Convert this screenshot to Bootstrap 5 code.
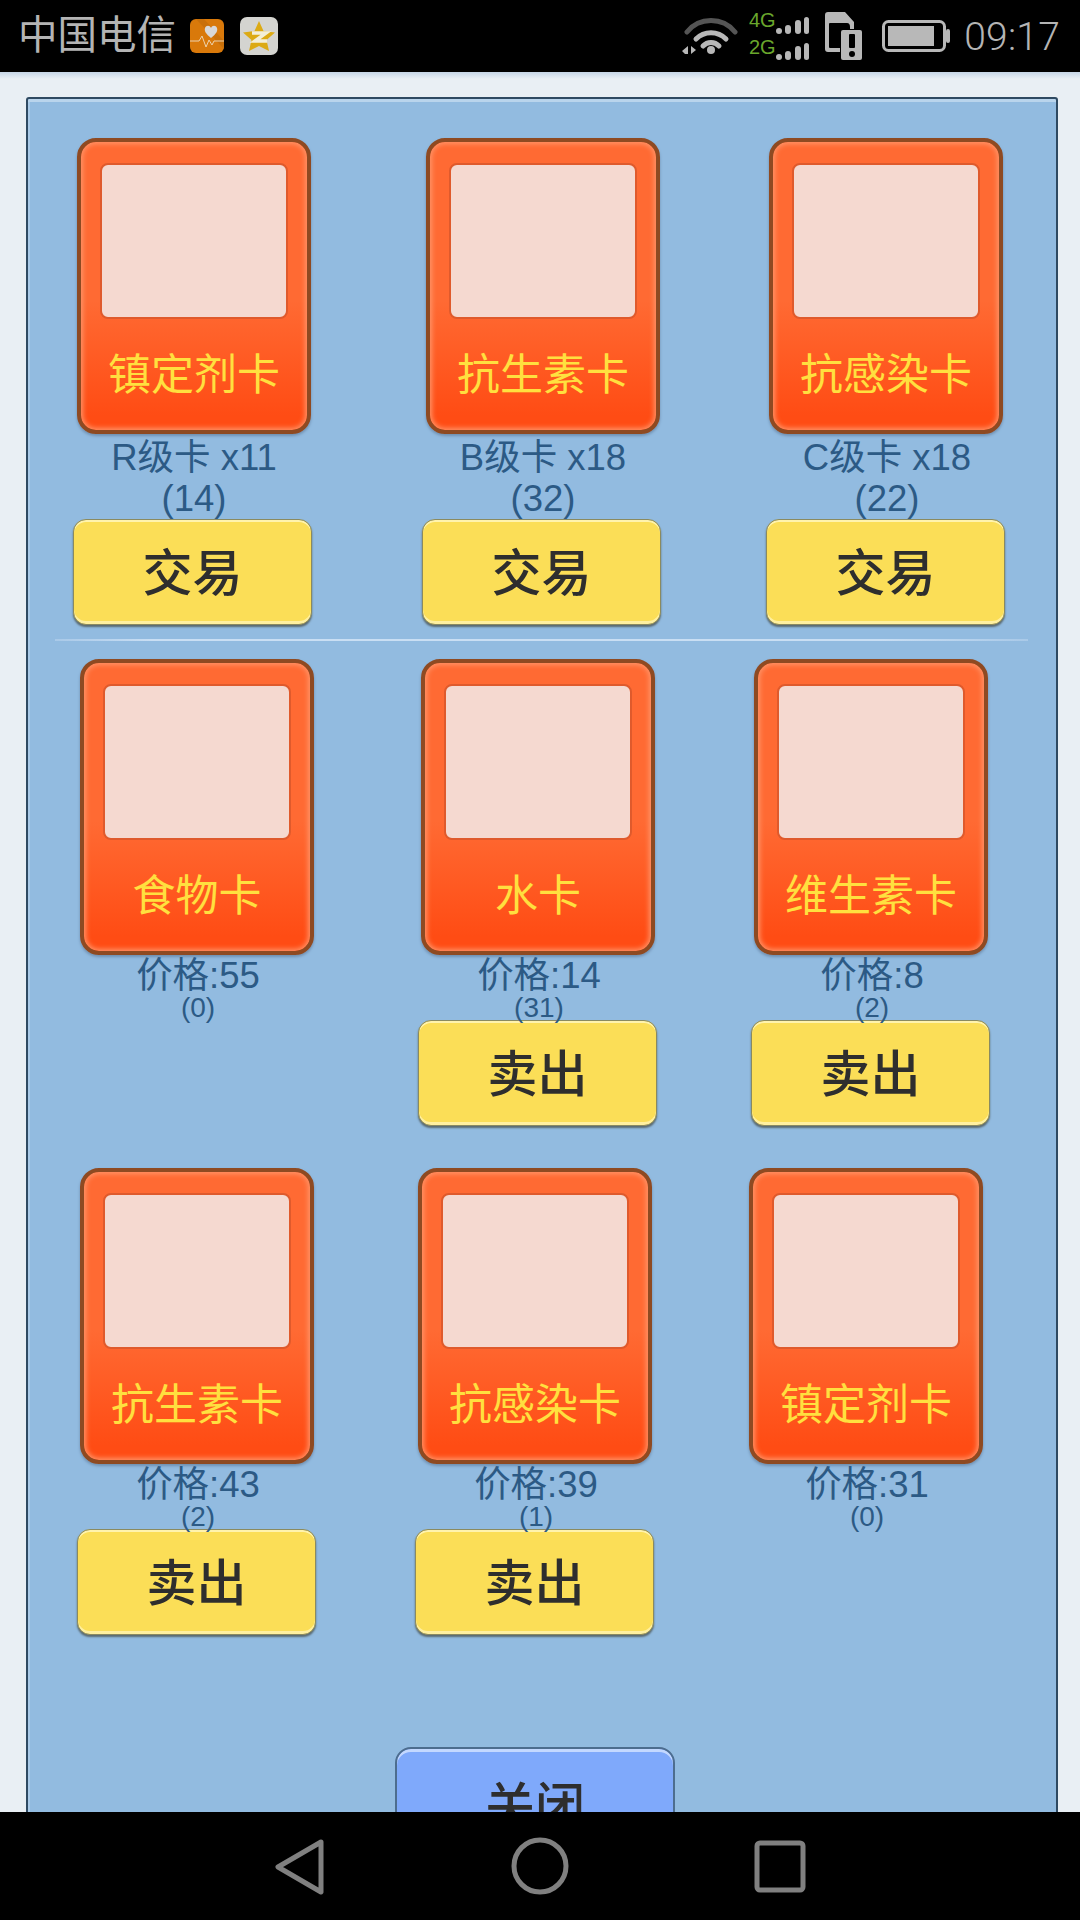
<!doctype html>
<html lang="zh-CN">
  <head>
    <meta charset="UTF-8" />
    <meta name="viewport" content="width=device-width, initial-scale=1.0" />
    <title>交易</title>
    <link
      href="https://cdn.jsdelivr.net/npm/bootstrap@5.3.0/dist/css/bootstrap.min.css"
      rel="stylesheet"
    />
    <style>
      body {
        height: 1920px;
        background: #e9eff4;
        font-family: "Liberation Sans", "Noto Sans CJK SC", sans-serif;
      }
      .status-bar {
        height: 72px;
        padding: 0 20px 0 18px;
        background: #000;
        color: #b4b4b4;
        flex: none;
      }
      .carrier { font-size: 39.5px; line-height: 1; width: 172px; margin-top: -1px; }
      .clock { font: 300 39px/1 Roboto, sans-serif; margin-left: 14px; margin-top: 2px; letter-spacing: .2px; }
      .page-area {
        min-height: 0;
        padding: 25px 22px 0 26px;
        background: linear-gradient(#c6d6e6, #e9eff4 7px);
      }
      .shop-panel {
        height: 1800px;
        border: 2px solid #2f4a62;
        border-radius: 3px 3px 0 0;
        background: #92bbe0;
        box-shadow: inset 0 3px 0 #b9d4ec, inset 2px 0 0 #a9cae8;
        padding-top: 39px;
      }
      .shop-row { display: grid; }
      .shop-row-a { grid-template-columns: 349px 344px 240px; padding-left: 45px; }
      .shop-row-b { grid-template-columns: 341px 333px 240px; padding-left: 49px; }
      .shop-row-c { grid-template-columns: 338px 331px 240px; padding-left: 49px; margin-top: 42px; }
      .goods-card {
        width: 234px;
        height: 296px;
        margin-left: 3px;
        padding: 21px 19px 0;
        border: 4px solid #8e4a22;
        border-radius: 19px;
        background: linear-gradient(#ff6a33, #ff6a33 55%, #ff4c14 95%);
        box-shadow: inset 0 0 5px 2px #ff9468, 0 2px 3px #6f8fb0;
        text-align: center;
      }
      .shop-row-a .goods-card, .shop-row-a .card-caption { margin-left: 4px; }
      .shop-row-a > div:nth-child(3) .goods-card { margin-left: 3px; }
      .goods-pic {
        height: 156px;
        border: 2px solid #df5a2c;
        border-radius: 8px;
        background: #f5d9d0;
      }
      .goods-name {
        margin-top: 30px;
        margin-left: -10px;
        margin-right: -10px;
        color: #ffe03f;
        font-size: 43px;
        line-height: 52px;
        white-space: nowrap;
      }
      .card-caption { width: 234px; margin-left: 4px; color: #2c5a85; text-align: center; }
      .caption-main { font-size: 36.5px; line-height: 41px; white-space: nowrap; }
      .shop-row-a .card-caption { padding-top: 3px; }
      .shop-row-b .card-caption, .shop-row-c .card-caption { padding-top: 1px; }
      .shop-row-b .caption-main, .shop-row-c .caption-main { line-height: 40px; }
      .caption-sub { font-size: 28px; line-height: 24px; }
      .game-btn {
        display: block;
        width: 239px;
        height: 106px;
        padding: 3px 0 0;
        border: 1px solid #8a8a60;
        border-radius: 13px;
        background: #fbde57;
        box-shadow: inset 0 2px 0 #fff3ad, inset 0 -3px 0 #fff0a0, 0 2px 2px #5a6a70;
        color: #2e2e2e;
        font-size: 50px;
        font-weight: 500;
        line-height: 1;
      }
      .rule-line {
        height: 2px;
        margin: 14px 28px 18px 27px;
        background: linear-gradient(90deg, #a9c9e8, #c9def3 10%, #c9def3 85%, #a9c9e8);
      }
      .btn-close-panel {
        display: block;
        width: 280px;
        height: 116px;
        margin: 112px 0 0 367px;
        padding: 3px 0 0;
        border: 2px solid #4d6d8f;
        border-radius: 16px;
        background: #7fa9fb;
        box-shadow: inset 0 3px 0 #c3d8ff;
        color: #2e2e2e;
        font-size: 50px;
        font-weight: 500;
        line-height: 1;
      }
      .soft-bar { height: 108px; background: #000; flex: none; }
      .soft-bar svg { display: block; }
      .sig-block { margin-left: 11px; }
      .batt-icon { margin-left: 19px; }
    </style>
  </head>
  <body class="d-flex flex-column overflow-hidden">
    <div class="status-bar d-flex align-items-center">
      <span class="carrier">中国电信</span>
      <svg width="34" height="34" viewBox="0 0 34 34">
        <rect width="34" height="34" rx="6" fill="#d9790a" />
        <path d="M6 0 L34 30 V22 L14 0Z" fill="#c9700a" />
        <path d="M21 19 C16 15 14 12 15 9 C16 6 20 6 21 9 C22 6 26 6 27 9 C28 12 26 15 21 19Z" fill="#d8d8d8" />
        <path d="M0 22 H9 L12 17 L16 28 L19 21 L22 26 L24 22 H34" fill="none" stroke="#ecd2ad" stroke-width="1" />
      </svg>
      <svg class="ms-3" width="38" height="38" viewBox="0 0 38 38">
        <rect width="38" height="38" rx="7" fill="#d4d4d0" />
        <path d="M19 4 L23.500 14 L35 15.500 L26.500 23 L29 34 L19 29 L9 34 L11.500 23 L3 15.500 L14.500 14Z" fill="#dcaa14" />
        <path d="M12 16 H26 L15 24 H27" fill="none" stroke="#f3efd8" stroke-width="3.500" />
      </svg>
      <svg class="ms-auto" width="56" height="40" viewBox="0 0 56 40">
        <path d="M5 16 A31 31 0 0 1 53 16" fill="none" stroke="#555" stroke-width="5" stroke-linecap="round" />
        <path d="M14 23 A21 21 0 0 1 44 23" fill="none" stroke="#b8b8b8" stroke-width="5" stroke-linecap="round" />
        <path d="M21 30 A11 11 0 0 1 37 30" fill="none" stroke="#b8b8b8" stroke-width="5" stroke-linecap="round" />
        <circle cx="29" cy="34" r="4" fill="#b8b8b8" />
        <path d="M6 30 V38 H3 L0 35Z M9 30 L14 34 L9 38Z" fill="#b8b8b8" />
      </svg>
      <svg class="sig-block" width="60" height="56" viewBox="0 -4 60 56">
        <text x="0" y="15" font-family="Liberation Sans" font-size="20" fill="#6aa72c">4G</text>
        <text x="0" y="42" font-family="Liberation Sans" font-size="20" fill="#6aa72c">2G</text>
        <g fill="#b8b8b8">
          <rect x="27" y="16" width="6" height="6" rx="3" />
          <rect x="36" y="13" width="6" height="9" rx="3" />
          <rect x="46" y="8" width="6" height="14" rx="3" />
          <rect x="55" y="5" width="5" height="17" rx="2.500" />
          <rect x="27" y="42" width="6" height="6" rx="3" />
          <rect x="36" y="39" width="6" height="9" rx="3" />
          <rect x="46" y="34" width="6" height="14" rx="3" />
          <rect x="55" y="31" width="5" height="17" rx="2.500" />
        </g>
      </svg>
      <svg class="ms-3" width="38" height="48" viewBox="0 0 38 48">
        <path fill-rule="evenodd" d="M3 0 H20 L29 10 V40 H3 Q0 40 0 37 V3 Q0 0 3 0Z M5 11 Q4 11 4 12 V35 Q4 36 5 36 H25 V15 Q25 11 22 11Z" fill="#b8b8b8" />
        <rect x="15" y="17" width="23" height="31" rx="2" fill="#000" />
        <rect x="16" y="18" width="21" height="30" rx="2" fill="#b8b8b8" />
        <rect x="24" y="22" width="6" height="14" rx="1" fill="#000" />
        <circle cx="27" cy="42" r="3" fill="#000" />
      </svg>
      <svg class="batt-icon" width="68" height="32" viewBox="0 0 68 32">
        <rect x="1.500" y="1.500" width="61" height="29" rx="5" fill="none" stroke="#b8b8b8" stroke-width="3" />
        <rect x="6" y="6" width="46" height="20" fill="#b8b8b8" />
        <rect x="64" y="9" width="4" height="14" rx="2" fill="#b8b8b8" />
      </svg>
      <span class="clock">09:17</span>
    </div>

    <div class="page-area flex-grow-1 overflow-hidden">
      <div class="shop-panel">
        <div class="shop-row shop-row-a">
          <div>
            <div class="goods-card"><div class="goods-pic"></div><div class="goods-name">镇定剂卡</div></div>
            <div class="card-caption"><div class="caption-main">R级卡 x11</div><div class="caption-main">(14)</div></div>
            <button type="button" class="btn game-btn">交易</button>
          </div>
          <div>
            <div class="goods-card"><div class="goods-pic"></div><div class="goods-name">抗生素卡</div></div>
            <div class="card-caption"><div class="caption-main">B级卡 x18</div><div class="caption-main">(32)</div></div>
            <button type="button" class="btn game-btn">交易</button>
          </div>
          <div>
            <div class="goods-card"><div class="goods-pic"></div><div class="goods-name">抗感染卡</div></div>
            <div class="card-caption"><div class="caption-main">C级卡 x18</div><div class="caption-main">(22)</div></div>
            <button type="button" class="btn game-btn">交易</button>
          </div>
        </div>

        <div class="rule-line"></div>

        <div class="shop-row shop-row-b">
          <div>
            <div class="goods-card"><div class="goods-pic"></div><div class="goods-name">食物卡</div></div>
            <div class="card-caption"><div class="caption-main">价格:55</div><div class="caption-sub">(0)</div></div>
          </div>
          <div>
            <div class="goods-card"><div class="goods-pic"></div><div class="goods-name">水卡</div></div>
            <div class="card-caption"><div class="caption-main">价格:14</div><div class="caption-sub">(31)</div></div>
            <button type="button" class="btn game-btn">卖出</button>
          </div>
          <div>
            <div class="goods-card"><div class="goods-pic"></div><div class="goods-name">维生素卡</div></div>
            <div class="card-caption"><div class="caption-main">价格:8</div><div class="caption-sub">(2)</div></div>
            <button type="button" class="btn game-btn">卖出</button>
          </div>
        </div>

        <div class="shop-row shop-row-c">
          <div>
            <div class="goods-card"><div class="goods-pic"></div><div class="goods-name">抗生素卡</div></div>
            <div class="card-caption"><div class="caption-main">价格:43</div><div class="caption-sub">(2)</div></div>
            <button type="button" class="btn game-btn">卖出</button>
          </div>
          <div>
            <div class="goods-card"><div class="goods-pic"></div><div class="goods-name">抗感染卡</div></div>
            <div class="card-caption"><div class="caption-main">价格:39</div><div class="caption-sub">(1)</div></div>
            <button type="button" class="btn game-btn">卖出</button>
          </div>
          <div>
            <div class="goods-card"><div class="goods-pic"></div><div class="goods-name">镇定剂卡</div></div>
            <div class="card-caption"><div class="caption-main">价格:31</div><div class="caption-sub">(0)</div></div>
          </div>
        </div>

        <button type="button" class="btn btn-close-panel">关闭</button>
      </div>
    </div>

    <div class="soft-bar d-flex">
      <svg width="1080" height="108" viewBox="0 0 1080 108">
        <path d="M321 30 L278 55 L321 80Z" fill="none" stroke="#808080" stroke-width="5" stroke-linejoin="round" />
        <circle cx="540" cy="54" r="26" fill="none" stroke="#808080" stroke-width="5" />
        <rect x="757" y="31" width="46" height="47" rx="3" fill="none" stroke="#808080" stroke-width="5" />
      </svg>
    </div>

    <script src="https://cdn.jsdelivr.net/npm/bootstrap@5.3.0/dist/js/bootstrap.bundle.min.js"></script>
  </body>
</html>
